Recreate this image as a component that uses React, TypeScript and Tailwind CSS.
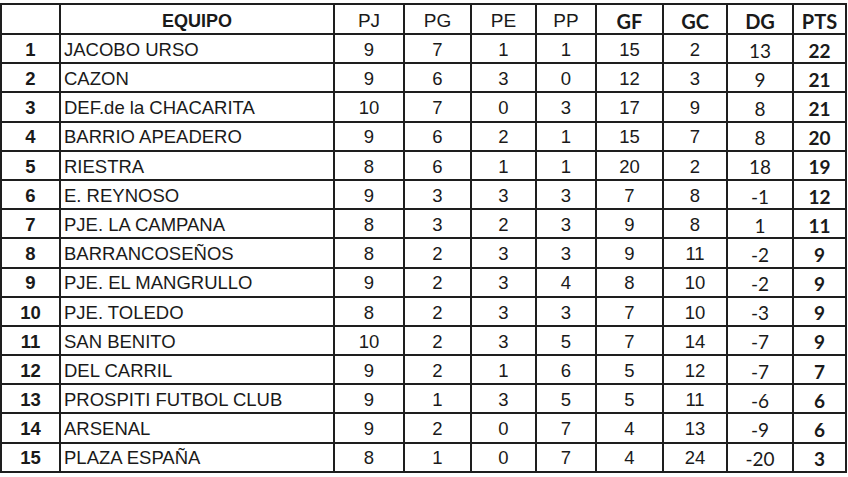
import React from "react";

const rows: [number, string, number, number, number, number, number, number, number, number][] = [
  [1, "JACOBO URSO", 9, 7, 1, 1, 15, 2, 13, 22],
  [2, "CAZON", 9, 6, 3, 0, 12, 3, 9, 21],
  [3, "DEF.de la CHACARITA", 10, 7, 0, 3, 17, 9, 8, 21],
  [4, "BARRIO APEADERO", 9, 6, 2, 1, 15, 7, 8, 20],
  [5, "RIESTRA", 8, 6, 1, 1, 20, 2, 18, 19],
  [6, "E. REYNOSO", 9, 3, 3, 3, 7, 8, -1, 12],
  [7, "PJE. LA CAMPANA", 8, 3, 2, 3, 9, 8, 1, 11],
  [8, "BARRANCOSEÑOS", 8, 2, 3, 3, 9, 11, -2, 9],
  [9, "PJE. EL MANGRULLO", 9, 2, 3, 4, 8, 10, -2, 9],
  [10, "PJE. TOLEDO", 8, 2, 3, 3, 7, 10, -3, 9],
  [11, "SAN BENITO", 10, 2, 3, 5, 7, 14, -7, 9],
  [12, "DEL CARRIL", 9, 2, 1, 6, 5, 12, -7, 7],
  [13, "PROSPITI FUTBOL CLUB", 9, 1, 3, 5, 5, 11, -6, 6],
  [14, "ARSENAL", 9, 2, 0, 7, 4, 13, -9, 6],
  [15, "PLAZA ESPAÑA", 8, 1, 0, 7, 4, 24, -20, 3],
];

const cell = "border-r-2 border-b-2 border-[#1e1e1e] flex items-center overflow-hidden whitespace-nowrap pt-[3px] leading-none";
const arial = "font-['Liberation_Sans',Arial,sans-serif]";
const lato = "font-['Lato','Liberation_Sans',sans-serif]";

export default function App() {
  return (
    <div className="w-[848px] h-[477px] bg-white pt-[3px] text-[#1a1a1a]">
      <div className="grid w-[847px] grid-cols-[59px_274px_70px_67px_65px_60px_67px_64px_66px_53px] grid-rows-[30px_repeat(15,29.2px)] border-t-2 border-l-2 border-[#1e1e1e]">
        <div className={cell}></div>
        <div className={`${cell} justify-center ${arial} font-bold text-[18px]`}>EQUIPO</div>
        {["PJ", "PG", "PE", "PP"].map((h) => (
          <div key={h} className={`${cell} justify-center ${arial} text-[19px]`}>{h}</div>
        ))}
        {["GF", "GC", "DG", "PTS"].map((h) => (
          <div key={h} className={`${cell} justify-center ${lato} font-bold text-[20px]`}>{h}</div>
        ))}
        {rows.map((r) => (
          <React.Fragment key={r[0]}>
            <div className={`${cell} justify-center ${arial} font-bold text-[18.5px]`}>{r[0]}</div>
            <div className={`${cell} pl-[3px] ${arial} text-[18.5px]`}>{r[1]}</div>
            {[r[2], r[3], r[4], r[5], r[6], r[7]].map((v, i) => (
              <div key={i} className={`${cell} justify-center ${arial} text-[18.5px]`}>{v}</div>
            ))}
            <div className={`${cell} justify-center ${lato} text-[19px]`}>{r[8]}</div>
            <div className={`${cell} justify-center ${lato} font-bold text-[19px]`}>{r[9]}</div>
          </React.Fragment>
        ))}
      </div>
    </div>
  );
}
